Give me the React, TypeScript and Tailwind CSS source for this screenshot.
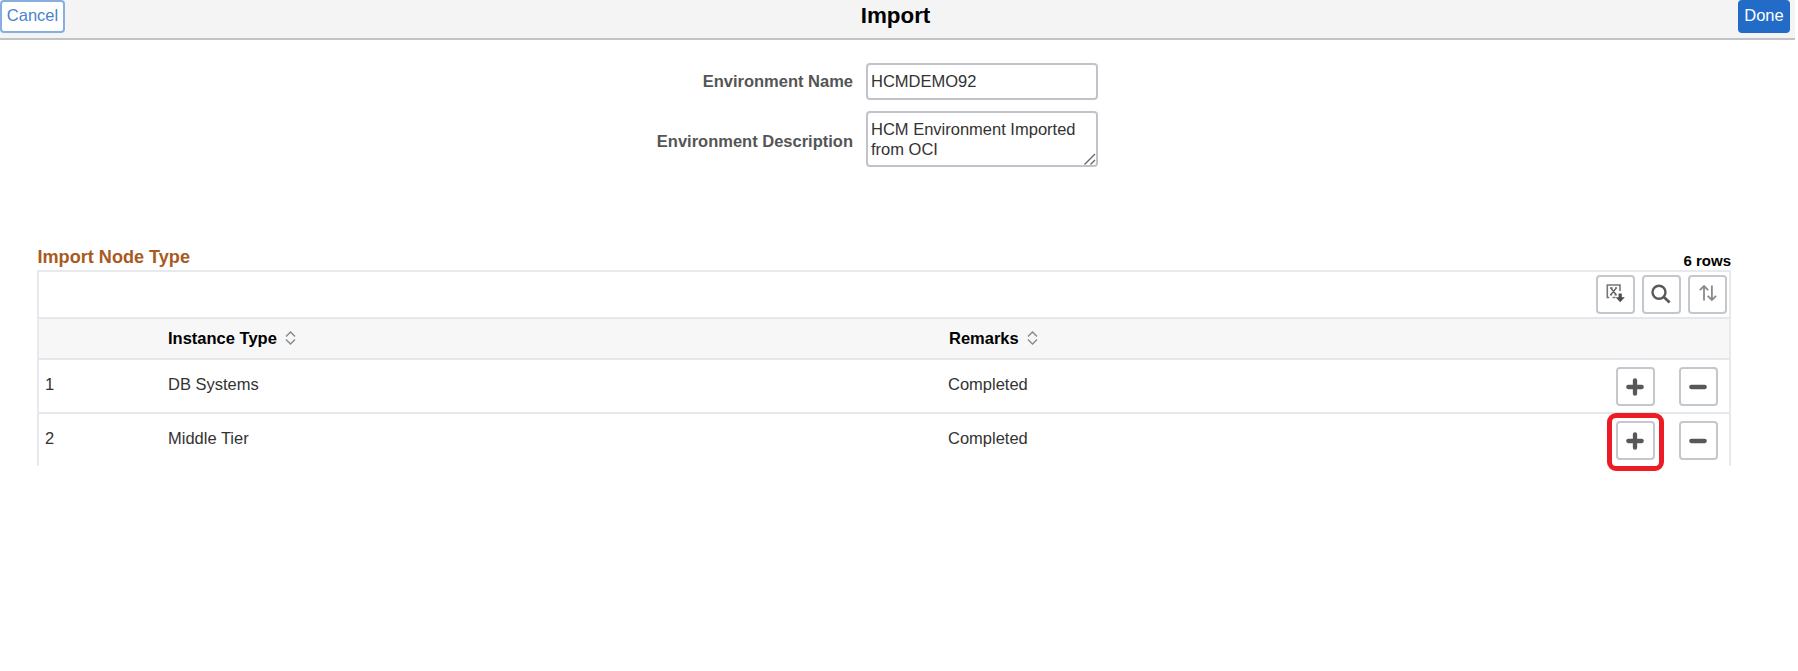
import React from "react";

const iconButton =
  "flex items-center justify-center shrink-0 rounded border-2 border-[#c4c7cc] bg-white";

function SortIcon() {
  return (
    <svg className="mb-[2px]" width="11" height="14" viewBox="0 0 11 14" fill="none" stroke="#8c8c8c" strokeWidth="1.5">
      <path d="M1 5.5 5.5 1 10 5.5M1 8.5 5.5 13 10 8.5" />
    </svg>
  );
}

function ExportIcon() {
  return (
    <svg className="mr-[2px] mb-[3px] shrink-0" width="20" height="20" viewBox="0 0 20 20" fill="none" stroke="#777" strokeWidth="1.6">
      <path d="M15 8V2H2.3v12.5h2M7.5 14.5h3" />
      <path d="M6 5.2 11 11.5M11 5.2 6 11.5M5 5h2.6M10 5h2M5 11.7h2M9.5 11.7h2.3" stroke="#666" strokeWidth="1.5" />
      <path d="M15.2 10.5V15" stroke="#4d4d4d" strokeWidth="3.2" />
      <path d="M10.6 14.3h9.2l-4.6 4.9z" fill="#4d4d4d" stroke="none" />
    </svg>
  );
}

function SearchIcon() {
  return (
    <svg className="mr-px mb-[2px] shrink-0" width="20" height="20" viewBox="0 0 20 20" fill="none" stroke="#5a5a5a" strokeWidth="2.4">
      <circle cx="8" cy="8.2" r="6.5" />
      <path d="m12.6 12.8 6 5.6" strokeWidth="2.8" />
    </svg>
  );
}

function ReorderIcon() {
  return (
    <svg className="mb-[3px] shrink-0" width="18" height="18" viewBox="0 0 18 18" fill="none" stroke="#8a8a8a" strokeWidth="1.8">
      <path d="M5 16.5V2M.8 6.2 5 2l4.2 4.2" />
      <path d="M12.9 1.5V16M8.7 11.8l4.2 4.2 4.2-4.2" />
    </svg>
  );
}

function Plus() {
  return (
    <svg className="mr-px" width="18" height="18" viewBox="0 0 18 18" stroke="#585858" strokeWidth="4.3" strokeLinecap="round">
      <path d="M9 2.3v13.4M2.3 9h13.4" />
    </svg>
  );
}

function Minus() {
  return (
    <svg className="mr-px" width="18" height="18" viewBox="0 0 18 18" stroke="#585858" strokeWidth="4.3" strokeLinecap="round">
      <path d="M2.3 9h13.4" />
    </svg>
  );
}

const rows = [
  { id: 1, type: "DB Systems", remarks: "Completed", marked: false },
  { id: 2, type: "Middle Tier", remarks: "Completed", marked: true },
];

export default function App() {
  return (
    <div className="h-[671px] w-[1798px] overflow-hidden bg-white font-['Liberation_Sans',Arial,sans-serif] text-[16.5px] text-[#333]">
      <header className="flex h-10 w-[1795px] items-start justify-between border-b-2 border-[#c0c4c8] bg-[#f4f4f4] pr-[5px]">
        <button className="h-[33px] w-[65px] rounded border-2 border-[#86afe0] bg-white pb-0.5 text-[16.5px] text-[#4a83cd]">
          Cancel
        </button>
        <h1 className="pt-px pr-[12px] text-[22.4px] leading-[30px] font-bold text-black">Import</h1>
        <button className="h-[33px] w-[52px] rounded bg-[#226bc6] pb-0.5 text-[16.5px] text-white">
          Done
        </button>
      </header>

      <form className="mt-[23px] grid w-[1098px] grid-cols-[853px_232px] gap-x-[13px] gap-y-[11px]">
        <label className="pt-[8px] text-right leading-5 font-bold text-[#555]">
          Environment Name
        </label>
        <div className="h-[37px] rounded border-2 border-[#c0c4ca] pt-[6px] pl-[3px] leading-5">
          HCMDEMO92
        </div>
        <label className="pt-5 text-right leading-5 font-bold text-[#555]">
          Environment Description
        </label>
        <div className="relative h-[56px] rounded border-2 border-[#c0c4ca] pt-[6px] pl-[3px] leading-5">
          HCM Environment Imported
          <br />
          from OCI
          <svg className="absolute right-0 bottom-0" width="12" height="12" viewBox="0 0 12 12" fill="none" stroke="#666" strokeWidth="1.4">
            <path d="M.5 11.5 11 1M6.5 11.5 11 7" />
          </svg>
        </div>
      </form>

      <section className="mt-[78px] ml-[37px] w-[1694px]">
        <div className="flex h-[25px] items-start justify-between">
          <h2 className="pl-[0.5px] text-[18.1px] leading-6 font-bold text-[#a85a1f]">Import Node Type</h2>
          <span className="pt-[7px] text-[15px] leading-[18px] font-bold text-black">6 rows</span>
        </div>
        <div className="h-[196px] border-x-2 border-t-2 border-[#e6eaee]">
          <div className="flex h-[45px] justify-end gap-[7px] pt-[3px] pr-[2px]">
            <button className={iconButton + " size-[39px]"}><ExportIcon /></button>
            <button className={iconButton + " size-[39px]"}><SearchIcon /></button>
            <button className={iconButton + " size-[39px]"}><ReorderIcon /></button>
          </div>
          <div className="flex h-[43px] items-center border-y-2 border-[#e4e7eb] bg-[#f7f7f7] font-bold text-black">
            <div className="ml-[129px] flex w-[781px] items-center gap-[8px]">
              Instance Type <SortIcon />
            </div>
            <div className="flex items-center gap-[8px]">
              Remarks <SortIcon />
            </div>
          </div>
          {rows.map((row) => (
            <div key={row.id} className="flex h-[54px] items-start border-b-2 border-[#e4e7eb] pt-[7px] last:border-b-0">
              <div className="w-[129px] pt-[7px] pl-[6px] leading-5">{row.id}</div>
              <div className="w-[780px] pt-[7px] leading-5">{row.type}</div>
              <div className="w-[668px] pt-[7px] leading-5">{row.remarks}</div>
              <div className="relative">
                <button className={iconButton + " size-[39px]"}><Plus /></button>
                {row.marked && (
                  <span className="absolute -top-[8px] -left-[9px] h-[58px] w-[57px] rounded-[9px] border-[5px] border-[#ed1c24]" />
                )}
              </div>
              <button className={iconButton + " ml-[24px] size-[39px]"}><Minus /></button>
            </div>
          ))}
        </div>
      </section>
    </div>
  );
}
